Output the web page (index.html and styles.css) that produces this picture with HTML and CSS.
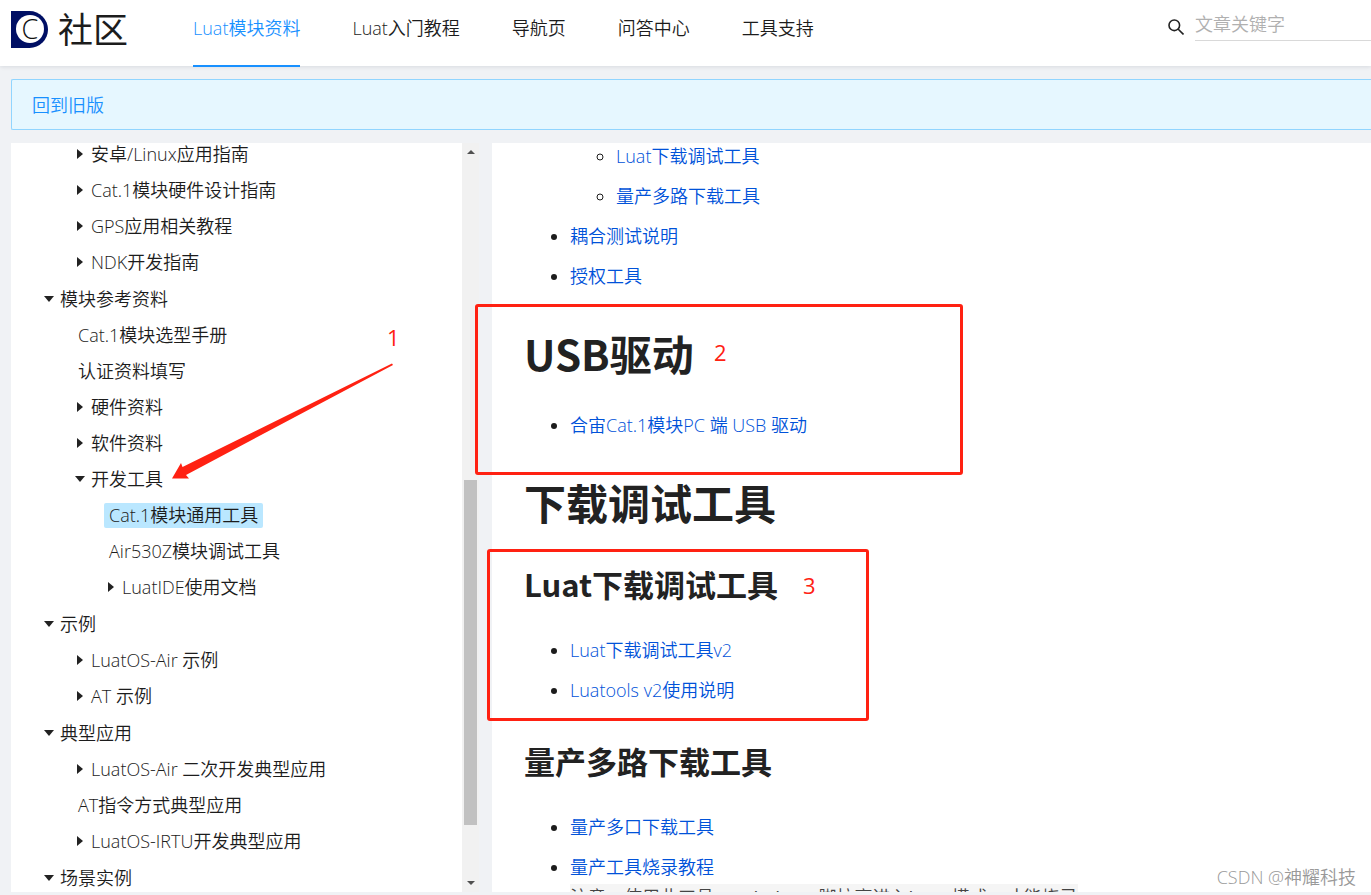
FILE: index.html
```html
<!DOCTYPE html>
<html lang="zh-CN">
<head>
<meta charset="utf-8">
<title>Cat.1模块通用工具</title>
<link rel="stylesheet" href="styles.css">
</head>
<body>
<header class="header">
  <a class="logo" href="#">
    <svg class="logo-mark" viewBox="0 0 37 37" aria-hidden="true">
      <path d="M0 0H18.500A18.500 18.500 0 0 1 18.500 37H0Z" fill="#000f64"/>
      <circle cx="19" cy="18" r="14" fill="#fff"/>
      <text class="logo-letter" x="19" y="28" text-anchor="middle">C</text>
    </svg>
    <span class="logo-name">社区</span>
  </a>
  <nav class="nav">
    <a class="nav-item active" href="#">Luat模块资料</a>
    <a class="nav-item" href="#">Luat入门教程</a>
    <a class="nav-item" href="#">导航页</a>
    <a class="nav-item" href="#">问答中心</a>
    <a class="nav-item" href="#">工具支持</a>
  </nav>
  <form class="search">
    <svg class="search-icon" viewBox="0 0 16 16" aria-hidden="true"><circle cx="6.300" cy="6.300" r="5.300"/><path d="M10 10L15.500 15.500"/></svg>
    <input class="search-input" type="text" placeholder="文章关键字" aria-label="文章关键字">
  </form>
</header>

<div class="notice"><a href="#">回到旧版</a></div>

<div class="columns">
  <aside class="sidebar">
    <ul class="tree">
      <li>
        <ul>
          <li class="row"><button class="caret" aria-label="展开"></button><a class="label" href="#">安卓/Linux应用指南</a></li>
          <li class="row"><button class="caret" aria-label="展开"></button><a class="label" href="#">Cat.1模块硬件设计指南</a></li>
          <li class="row"><button class="caret" aria-label="展开"></button><a class="label" href="#">GPS应用相关教程</a></li>
          <li class="row"><button class="caret" aria-label="展开"></button><a class="label" href="#">NDK开发指南</a></li>
        </ul>
      </li>
      <li>
        <div class="row"><button class="caret open" aria-label="收起"></button><a class="label" href="#">模块参考资料</a></div>
        <ul>
          <li class="row"><a class="label" href="#">Cat.1模块选型手册</a></li>
          <li class="row"><a class="label" href="#">认证资料填写</a></li>
          <li class="row"><button class="caret" aria-label="展开"></button><a class="label" href="#">硬件资料</a></li>
          <li class="row"><button class="caret" aria-label="展开"></button><a class="label" href="#">软件资料</a></li>
          <li>
            <div class="row"><button class="caret open" aria-label="收起"></button><a class="label" href="#">开发工具</a></div>
            <ul>
              <li class="row"><a class="label selected" href="#">Cat.1模块通用工具</a></li>
              <li class="row"><a class="label" href="#">Air530Z模块调试工具</a></li>
              <li class="row"><button class="caret" aria-label="展开"></button><a class="label" href="#">LuatIDE使用文档</a></li>
            </ul>
          </li>
        </ul>
      </li>
      <li>
        <div class="row"><button class="caret open" aria-label="收起"></button><a class="label" href="#">示例</a></div>
        <ul>
          <li class="row"><button class="caret" aria-label="展开"></button><a class="label" href="#">LuatOS-Air 示例</a></li>
          <li class="row"><button class="caret" aria-label="展开"></button><a class="label" href="#">AT 示例</a></li>
        </ul>
      </li>
      <li>
        <div class="row"><button class="caret open" aria-label="收起"></button><a class="label" href="#">典型应用</a></div>
        <ul>
          <li class="row"><button class="caret" aria-label="展开"></button><a class="label" href="#">LuatOS-Air 二次开发典型应用</a></li>
          <li class="row"><a class="label" href="#">AT指令方式典型应用</a></li>
          <li class="row"><button class="caret" aria-label="展开"></button><a class="label" href="#">LuatOS-IRTU开发典型应用</a></li>
        </ul>
      </li>
      <li>
        <div class="row"><button class="caret open" aria-label="收起"></button><a class="label" href="#">场景实例</a></div>
      </li>
    </ul>
    <div class="scrollbar" aria-hidden="true">
      <span class="arrow up"></span>
      <span class="track-before"></span>
      <span class="thumb"></span>
      <span class="track-after"></span>
      <span class="arrow down"></span>
    </div>
  </aside>

  <main class="doc">
    <ul>
      <li class="plain">
        <ul>
          <li><a href="#">Luat下载调试工具</a></li>
          <li><a href="#">量产多路下载工具</a></li>
        </ul>
      </li>
      <li><a href="#">耦合测试说明</a></li>
      <li><a href="#">授权工具</a></li>
    </ul>
    <h1>USB驱动</h1>
    <ul>
      <li><a href="#">合宙Cat.1模块PC 端 USB 驱动</a></li>
    </ul>
    <h1>下载调试工具</h1>
    <h2>Luat下载调试工具</h2>
    <ul>
      <li><a href="#">Luat下载调试工具v2</a></li>
      <li><a href="#">Luatools v2使用说明</a></li>
    </ul>
    <h2>量产多路下载工具</h2>
    <ul>
      <li><a href="#">量产多口下载工具</a></li>
      <li><a href="#">量产工具烧录教程</a><br><code>注意：使用此工具，usb_boot脚拉高进入boot模式，才能烧录</code></li>
    </ul>
  </main>
</div>

<div class="marks">
  <svg class="mark arrow-mark" viewBox="0 0 222 116" aria-hidden="true"><path d="M220 .500L221 2L14 112L17 115.500L0 115.500L9 100L10.500 104Z"/></svg>
  <span class="mark num num-1">1</span>
  <span class="mark box box-2"></span>
  <span class="mark num num-2">2</span>
  <span class="mark box box-3"></span>
  <span class="mark num num-3">3</span>
  <span class="mark watermark">CSDN @神耀科技</span>
</div>
</body>
</html>
```

FILE: styles.css
```css
* {
  box-sizing: border-box;
}

body {
  margin: 0;
  height: 100vh;
  overflow: hidden;
  position: relative;
  display: flex;
  flex-direction: column;
  background: #f0f2f5;
  color: #1c1c1c;
  font-family: "Open Sans", "Noto Sans CJK SC", sans-serif;
  font-size: 18px;
  font-weight: 350;
  line-height: 27px;
}

a {
  color: inherit;
  text-decoration: none;
}

ul {
  margin: 0;
  padding: 0;
  list-style: none;
}

/* Header */
.header {
  flex: none;
  display: flex;
  height: 66px;
  padding-left: 11px;
  background: #fff;
  box-shadow: 0 1px 4px rgba(0, 21, 41, 0.1);
}

.logo {
  display: flex;
  align-items: center;
  gap: 10px;
  width: 182px;
  padding-bottom: 7px;
}

.logo-mark {
  width: 37px;
  height: 37px;
}

.logo-letter {
  font-size: 27px;
  font-weight: 350;
  fill: #111;
}

.logo-name {
  font-size: 35px;
  font-weight: 400;
  line-height: 38px;
}

.nav {
  display: flex;
  gap: 52px;
}

.nav-item {
  height: 67px;
  padding-top: 15px;
  white-space: nowrap;
}

.nav-item.active {
  color: #1890ff;
  border-bottom: 2px solid #1890ff;
}

.search {
  display: flex;
  align-items: flex-start;
  gap: 11px;
  width: 203px;
  margin-left: auto;
  padding-top: 8px;
}

.search-icon {
  flex: none;
  width: 16px;
  height: 16px;
  margin-top: 11px;
  fill: none;
  stroke: #222;
  stroke-width: 1.6;
}

.search-input {
  flex: 1;
  min-width: 0;
  height: 33px;
  padding: 0 0 1px;
  border: 0;
  border-bottom: 1px solid #d9d9d9;
  outline: 0;
  background: none;
  font: inherit;
}

.search-input::placeholder {
  color: #b0b0b0;
}

/* Notice bar */
.notice {
  flex: none;
  margin: 13px 0 13px 11px;
  padding: 12px 20px 10px;
  border: 1px solid #91d5ff;
  border-right: 0;
  border-radius: 2px 0 0 2px;
  background: #e6f7ff;
  color: #1890ff;
}

/* Two columns */
.columns {
  flex: 1;
  min-height: 0;
  display: flex;
  gap: 13px;
  padding: 0 0 3px 11px;
}

.sidebar {
  flex: none;
  width: 468px;
  display: flex;
  overflow: hidden;
  background: #fff;
}

.tree {
  flex: 1;
  margin-top: -7px;
}

.tree > li {
  padding: 0 0 1px 31px;
}

.tree ul {
  padding-left: 31px;
}

.row {
  display: flex;
  align-items: center;
  height: 36px;
}

.caret {
  display: grid;
  place-items: center;
  width: 13px;
  height: 24px;
  padding: 0;
  border: 0;
  background: none;
}

.caret::before {
  content: "";
  border: solid transparent;
  border-width: 5px 0 5px 6px;
  border-left-color: #222;
}

.caret.open::before {
  border: solid transparent;
  border-width: 6px 5px 0;
  border-top-color: #222;
}

.label {
  padding: 0 5px;
  border-radius: 2px;
  line-height: 25px;
  white-space: nowrap;
}

.label.selected {
  background: #bae7ff;
}

.scrollbar {
  width: 17px;
  display: flex;
  flex-direction: column;
  align-items: center;
  background: #f1f1f1;
}

.arrow {
  flex: none;
  display: grid;
  place-items: center;
  width: 17px;
  height: 18px;
}

.arrow::before {
  content: "";
  border: solid transparent;
}

.arrow.up::before {
  border-width: 0 4px 4px;
  border-bottom-color: #505050;
}

.arrow.down::before {
  border-width: 4px 4px 0;
  border-top-color: #505050;
}

.track-before {
  flex: 319;
}

.thumb {
  flex: 345;
  width: 13px;
  background: #c1c1c1;
}

.track-after {
  flex: 49;
}

/* Document */
.doc {
  flex: 1;
  min-width: 0;
  overflow: hidden;
  padding-left: 32px;
  background: #fff;
}

.doc ul {
  display: grid;
  gap: 13px;
  padding-left: 46px;
  list-style: disc;
}

.doc ul ul {
  list-style: circle;
}

.doc .plain {
  list-style: none;
}

.doc a {
  color: #0052d9;
}

.doc h1,
.doc h2 {
  margin: 38px 0 34px;
  color: #222;
  font-family: "Noto Sans CJK SC", sans-serif;
  font-weight: 700;
}

.doc h1 {
  font-size: 42px;
  line-height: 50px;
}

.doc h2 {
  font-size: 31px;
  line-height: 38px;
}

.doc code {
  display: inline-block;
  margin-top: 3px;
  padding-top: 2px;
  background: #f5f5f5;
  color: #444;
  font-family: "Liberation Mono", "Noto Sans CJK SC", monospace;
  font-size: 18px;
}

/* Annotations drawn over the page */
.marks {
  position: absolute;
  inset: 0;
  overflow: hidden;
  pointer-events: none;
}

.mark {
  position: absolute;
}

.arrow-mark {
  left: 172px;
  top: 363px;
  width: 222px;
  height: 116px;
  fill: #ff2112;
}

.box {
  border: 3px solid #ff2112;
  border-radius: 3px;
}

.box-2 {
  left: 475px;
  top: 304px;
  width: 488px;
  height: 171px;
}

.box-3 {
  left: 487px;
  top: 549px;
  width: 382px;
  height: 172px;
}

.num {
  color: #ff2112;
  font-size: 22px;
  font-weight: 400;
}

.num-1 {
  left: 387px;
  top: 324px;
}

.num-2 {
  left: 714px;
  top: 339px;
}

.num-3 {
  left: 803px;
  top: 572px;
}

.watermark {
  right: 15px;
  bottom: 4px;
  color: #999;
}
```
